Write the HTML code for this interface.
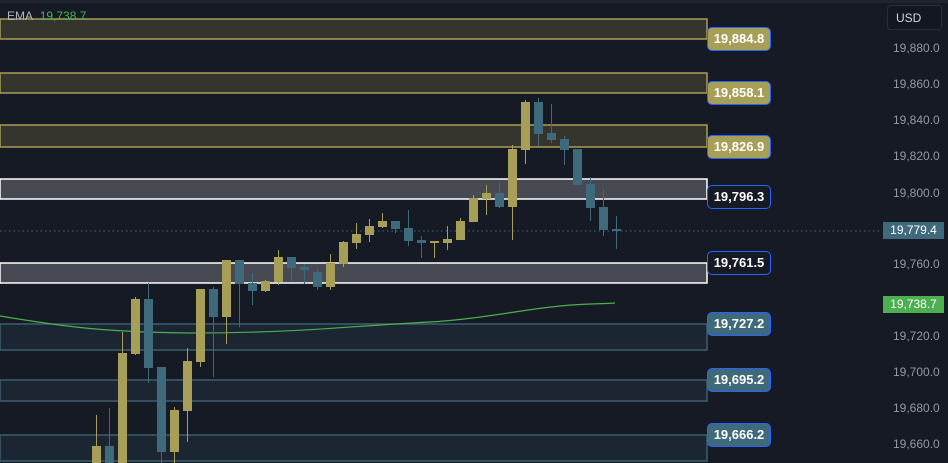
<!DOCTYPE html><html><head><meta charset="utf-8"><style>
body{margin:0;background:#161a25;width:948px;height:463px;overflow:hidden;font-family:"Liberation Sans",sans-serif}
svg{position:absolute;left:0;top:0}
.lb{position:absolute;left:707px;width:62px;height:22px;border:1.5px solid #2962ff;border-radius:5px;color:#fff;font-size:13px;font-weight:bold;line-height:22px;text-align:center;box-sizing:content-box}
.ax{position:absolute;left:893px;color:#9598a1;font-size:12px}
</style></head><body>
<svg width="948" height="463">
<rect x="0" y="0" width="948" height="3" fill="#20242f"/>
<g>
<rect x="0" y="19" width="707" height="20" fill="#35352d" stroke="#a79e58" stroke-width="1.5"/>
<rect x="0" y="73" width="707" height="20" fill="#35352d" stroke="#a79e58" stroke-width="1.5"/>
<rect x="0" y="125" width="707" height="22" fill="#35352d" stroke="#a79e58" stroke-width="1.5"/>
<rect x="0" y="179" width="707" height="20" fill="#474a53" stroke="#fff" stroke-width="1.5"/>
<rect x="0" y="263" width="707" height="20" fill="#474a53" stroke="#fff" stroke-width="1.5"/>
<rect x="0" y="324" width="707" height="26" fill="#1c2632" stroke="#3c5f6d" stroke-width="1.5"/>
<rect x="0" y="380" width="707" height="21" fill="#1c2632" stroke="#3c5f6d" stroke-width="1.5"/>
<rect x="0" y="435" width="707" height="26" fill="#1c2632" stroke="#3c5f6d" stroke-width="1.5"/>
</g>
<line x1="0" y1="231" x2="880" y2="231" stroke="#3f6a7b" stroke-dasharray="1.5 3"/>
<path d="M0 316 C60 326 100 332 190 333 C300 333 350 326 430 322 C480 319 520 310 560 306 C590 303 605 304 615 303" fill="none" stroke="#4caf50" stroke-width="1.2"/>
<g id="c"></g>
<g fill="#a79e58" stroke="#a79e58">
<line x1="96.5" y1="415" x2="96.5" y2="463"/><rect x="92" y="446" width="9" height="17" stroke="none"/>
<line x1="122.5" y1="332" x2="122.5" y2="463"/><rect x="118" y="353" width="9" height="110" stroke="none"/>
<line x1="135.5" y1="297" x2="135.5" y2="355"/><rect x="131" y="299" width="9" height="55" stroke="none"/>
<line x1="174.5" y1="407" x2="174.5" y2="463"/><rect x="170" y="410" width="9" height="42" stroke="none"/>
<line x1="187.5" y1="348" x2="187.5" y2="442"/><rect x="183" y="361" width="9" height="50" stroke="none"/>
<line x1="200.5" y1="289" x2="200.5" y2="367"/><rect x="196" y="289" width="9" height="73" stroke="none"/>
<line x1="226.5" y1="260" x2="226.5" y2="344"/><rect x="222" y="260" width="9" height="57" stroke="none"/>
<line x1="265.5" y1="280" x2="265.5" y2="292"/><rect x="261" y="281" width="9" height="10" stroke="none"/>
<line x1="278.5" y1="250" x2="278.5" y2="285"/><rect x="274" y="257" width="9" height="25" stroke="none"/>
<line x1="330.5" y1="254" x2="330.5" y2="290"/><rect x="326" y="263" width="9" height="24" stroke="none"/>
<line x1="343.5" y1="241" x2="343.5" y2="267"/><rect x="339" y="242" width="9" height="22" stroke="none"/>
<line x1="356.5" y1="223" x2="356.5" y2="249"/><rect x="352" y="234" width="9" height="9" stroke="none"/>
<line x1="369.5" y1="219" x2="369.5" y2="242"/><rect x="365" y="226" width="9" height="9" stroke="none"/>
<line x1="382.5" y1="213" x2="382.5" y2="228"/><rect x="378" y="221" width="9" height="6" stroke="none"/>
<line x1="434.5" y1="241" x2="434.5" y2="258"/><rect x="430" y="241" width="9" height="2" stroke="none"/>
<line x1="447.5" y1="226" x2="447.5" y2="250"/><rect x="443" y="239" width="9" height="4" stroke="none"/>
<line x1="460.5" y1="218" x2="460.5" y2="240"/><rect x="456" y="221" width="9" height="19" stroke="none"/>
<line x1="473.5" y1="195" x2="473.5" y2="222"/><rect x="469" y="198" width="9" height="24" stroke="none"/>
<line x1="486.5" y1="185" x2="486.5" y2="215"/><rect x="482" y="193" width="9" height="6" stroke="none"/>
<line x1="512.5" y1="145" x2="512.5" y2="240"/><rect x="508" y="149" width="9" height="58" stroke="none"/>
<line x1="525.5" y1="100" x2="525.5" y2="164"/><rect x="521" y="102" width="9" height="48" stroke="none"/>
</g>
<g fill="#3f6a7b" stroke="#3f6a7b">
<line x1="109.5" y1="408" x2="109.5" y2="463"/><rect x="105" y="446" width="9" height="17" stroke="none"/>
<line x1="148.5" y1="283" x2="148.5" y2="383"/><rect x="144" y="299" width="9" height="69" stroke="none"/>
<line x1="161.5" y1="367" x2="161.5" y2="463"/><rect x="157" y="367" width="9" height="85" stroke="none"/>
<line x1="213.5" y1="287" x2="213.5" y2="377"/><rect x="209" y="289" width="9" height="28" stroke="none"/>
<line x1="239.5" y1="260" x2="239.5" y2="327"/><rect x="235" y="260" width="9" height="24" stroke="none"/>
<line x1="252.5" y1="273" x2="252.5" y2="305"/><rect x="248" y="283" width="9" height="8" stroke="none"/>
<line x1="291.5" y1="257" x2="291.5" y2="281"/><rect x="287" y="257" width="9" height="11" stroke="none"/>
<line x1="304.5" y1="264" x2="304.5" y2="284"/><rect x="300" y="267" width="9" height="3" stroke="none"/>
<line x1="317.5" y1="269" x2="317.5" y2="290"/><rect x="313" y="272" width="9" height="15" stroke="none"/>
<line x1="395.5" y1="221" x2="395.5" y2="233"/><rect x="391" y="221" width="9" height="8" stroke="none"/>
<line x1="408.5" y1="210" x2="408.5" y2="246"/><rect x="404" y="228" width="9" height="13" stroke="none"/>
<line x1="421.5" y1="236" x2="421.5" y2="258"/><rect x="417" y="240" width="9" height="3" stroke="none"/>
<line x1="499.5" y1="182" x2="499.5" y2="208"/><rect x="495" y="193" width="9" height="14" stroke="none"/>
<line x1="538.5" y1="98" x2="538.5" y2="146"/><rect x="534" y="102" width="9" height="32" stroke="none"/>
<line x1="551.5" y1="104" x2="551.5" y2="143"/><rect x="547" y="133" width="9" height="7" stroke="none"/>
<line x1="564.5" y1="136" x2="564.5" y2="165"/><rect x="560" y="139" width="9" height="11" stroke="none"/>
<rect x="573" y="149" width="9" height="36" stroke="none"/>
<line x1="590.5" y1="177" x2="590.5" y2="221"/><rect x="586" y="184" width="9" height="24" stroke="none"/>
<line x1="603.5" y1="189" x2="603.5" y2="236"/><rect x="599" y="207" width="9" height="23" stroke="none"/>
<line x1="616.5" y1="216" x2="616.5" y2="249"/><rect x="612" y="229" width="9" height="2" stroke="none"/>
</g>
</svg>
<div style="position:absolute;left:7px;top:9px;font-size:12px;color:#b2b5be">EMA <span style="color:#4caf50;margin-left:4px">19,738.7</span></div>
<div class="lb" style="top:27px;background:#a79e58">19,884.8</div>
<div class="lb" style="top:81px;background:#a79e58">19,858.1</div>
<div class="lb" style="top:135px;background:#a79e58">19,826.9</div>
<div class="lb" style="top:185px;background:#161a25">19,796.3</div>
<div class="lb" style="top:251px;background:#161a25">19,761.5</div>
<div class="lb" style="top:312px;background:#3f6a7b">19,727.2</div>
<div class="lb" style="top:368px;background:#3f6a7b">19,695.2</div>
<div class="lb" style="top:423px;background:#3f6a7b">19,666.2</div>
<div style="position:absolute;left:887px;top:5px;width:55px;height:25px;border:1px solid #2a2e39;border-radius:4px;background:#131722;color:#d1d4dc;font-size:12px;line-height:25px;padding-left:8px;box-sizing:border-box">USD</div>
<div class="ax" style="top:41px">19,880.0</div>
<div class="ax" style="top:77px">19,860.0</div>
<div class="ax" style="top:113px">19,840.0</div>
<div class="ax" style="top:149px">19,820.0</div>
<div class="ax" style="top:186px">19,800.0</div>
<div class="ax" style="top:257px">19,760.0</div>
<div class="ax" style="top:329px">19,720.0</div>
<div class="ax" style="top:365px">19,700.0</div>
<div class="ax" style="top:401px">19,680.0</div>
<div class="ax" style="top:437px">19,660.0</div>
<div style="position:absolute;left:883px;top:222px;width:61px;height:17px;background:#3f6a7b;color:#fff;font-size:12px;line-height:17px;text-align:center">19,779.4</div>
<div style="position:absolute;left:883px;top:296px;width:61px;height:17px;background:#4caf50;color:#fff;font-size:12px;line-height:17px;text-align:center">19,738.7</div>
</body></html>
